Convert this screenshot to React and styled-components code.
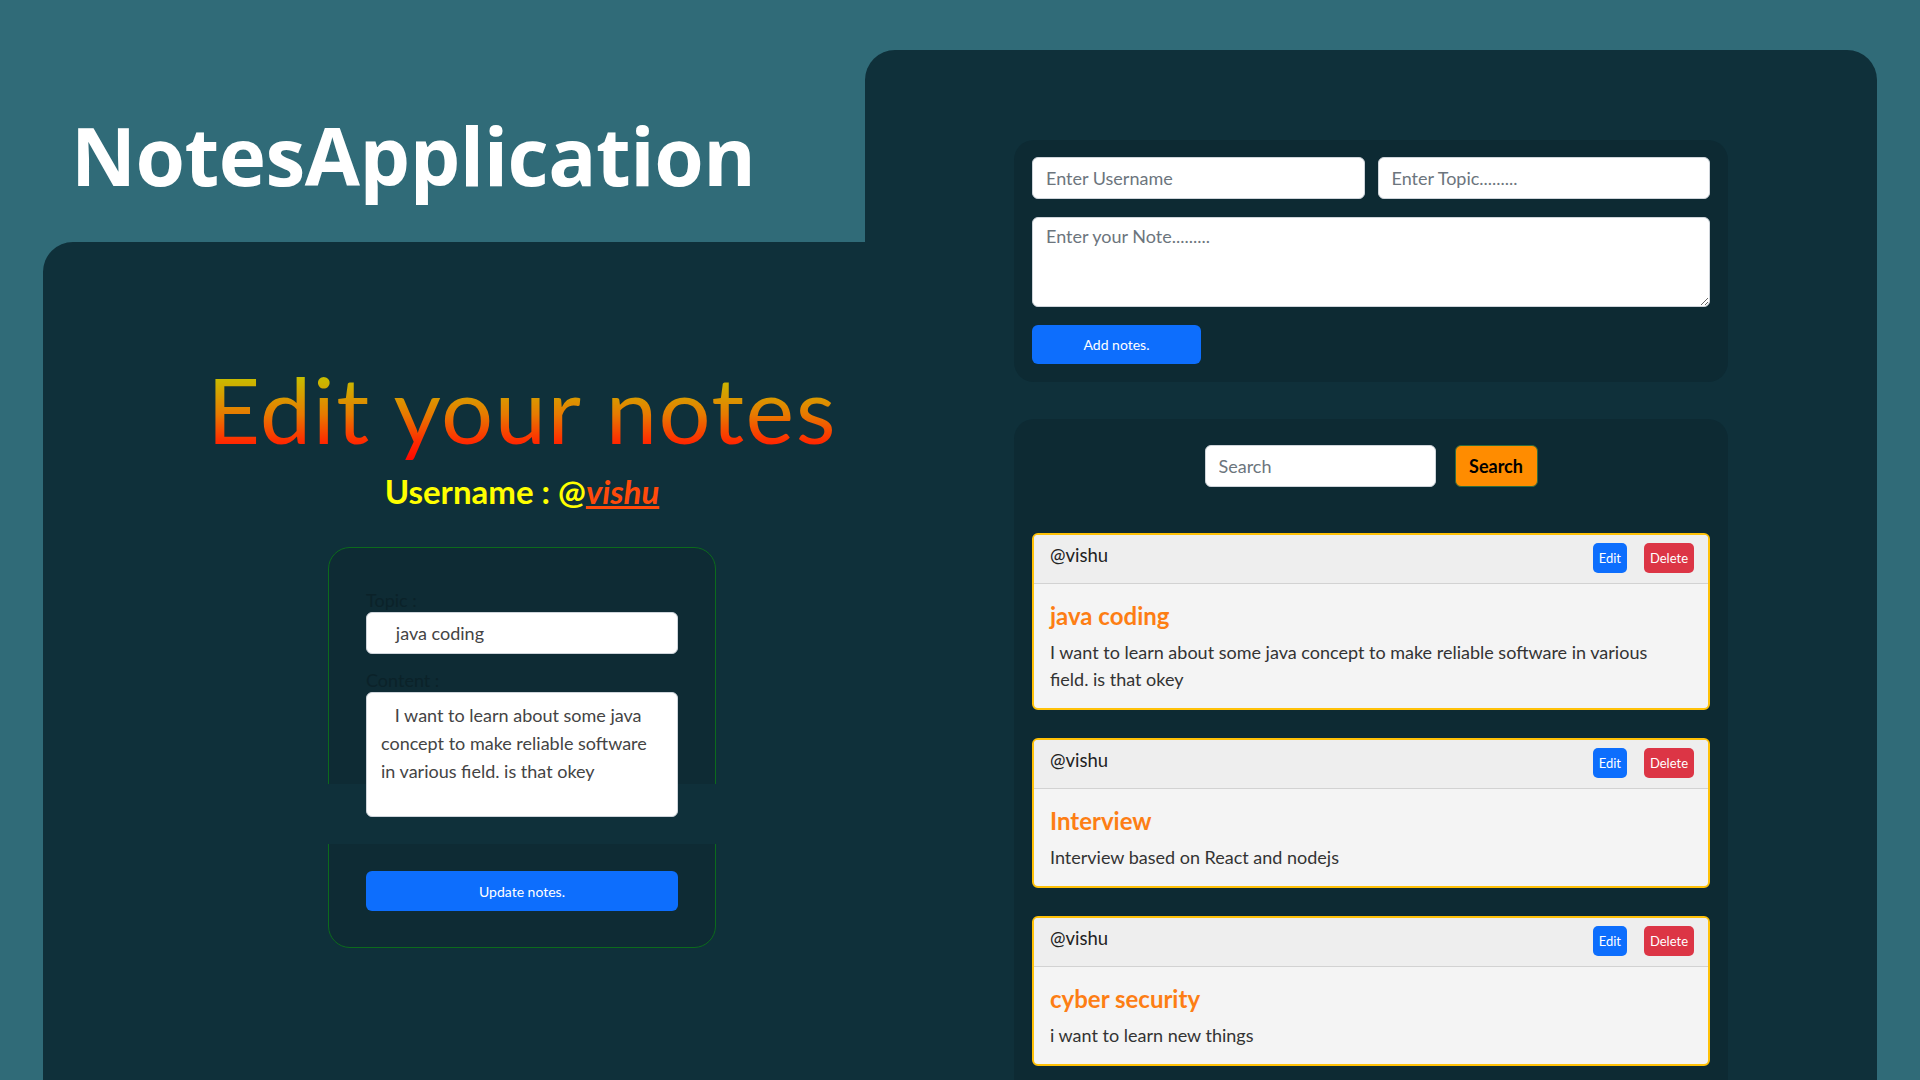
import React from 'react';
import styled, { createGlobalStyle } from 'styled-components';

const GlobalStyle = createGlobalStyle`
  html, body { margin: 0; padding: 0; height: 100%; overflow: hidden; background: #306b78; }
  body { font-family: Lato, "Open Sans", sans-serif; }
  * { box-sizing: border-box; }
`;

const Page = styled.div`
  display: grid;
  grid-template-columns: 822px 1012px;
  padding: 50px 43px 0;
  height: 1080px;
  overflow: hidden;
`;

const LeftCol = styled.div`
  display: flex;
  flex-direction: column;
  min-height: 0;
`;

const Header = styled.header`
  flex: none;
  height: 192px;
  padding: 65px 0 0 28px;
`;

const AppTitle = styled.h1`
  margin: 0;
  font-family: "Open Sans", sans-serif;
  font-weight: 700;
  font-size: 80px;
  line-height: 80px;
  color: #ffffff;
  letter-spacing: -0.5px;
`;

const LeftPanel = styled.section`
  flex: 1;
  background: #0f303a;
  border-top-left-radius: 30px;
  display: flex;
  flex-direction: column;
  align-items: center;
  padding: 112px 0 0 136px;
`;

const EditTitle = styled.h2`
  margin: 0;
  font-family: Lato, sans-serif;
  font-weight: 400;
  font-size: 92px;
  line-height: 110px;
  letter-spacing: 1.5px;
  background: linear-gradient(to bottom, #c4c400 18%, #e77a00 55%, #ff2a00 80%, #ff0000 100%);
  -webkit-background-clip: text;
  background-clip: text;
  color: transparent;
`;

const UserLine = styled.div`
  margin-top: 7px;
  font-family: Lato, sans-serif;
  font-weight: 700;
  font-size: 33px;
  line-height: 40px;
  color: #ffff00;
`;

const UserLink = styled.span`
  color: #ff4a0a;
  font-style: italic;
  text-decoration: underline;
`;

const EditCard = styled.div`
  position: relative;
  margin-top: 36px;
  width: 388px;
  border: 1px solid #0c6a1c;
  border-radius: 22px;
  background: #0e2b34;
  padding: 40px 37px 36px;
  display: flex;
  flex-direction: column;
`;

const Band = styled.div`
  position: absolute;
  top: 236px;
  left: -1px;
  right: -1px;
  height: 60px;
  background: #0f303a;
  z-index: 0;
`;

const HiddenLabel = styled.label`
  position: relative;
  z-index: 1;
  font-size: 18px;
  line-height: 24px;
  color: #0b2229;
  margin-top: ${p => p.$mt || 0}px;
`;

const EditInput = styled.input`
  position: relative;
  z-index: 1;
  height: 42px;
  width: 100%;
  border: 1px solid #ced4da;
  border-radius: 6px;
  background: #fff;
  font-family: Lato, sans-serif;
  font-size: 18px;
  color: #444;
  padding: 0 15px;
  white-space: pre;
  outline: none;
`;

const EditArea = styled.textarea`
  position: relative;
  z-index: 1;
  height: 125px;
  width: 100%;
  border: 1px solid #ced4da;
  border-radius: 6px;
  background: #fff;
  font-family: Lato, sans-serif;
  font-size: 18px;
  line-height: 28px;
  color: #444;
  padding: 8px 12px 8px 14px;
  resize: none;
  outline: none;
`;

const PrimaryButton = styled.button`
  position: relative;
  z-index: 1;
  height: ${p => p.$h || 40}px;
  width: ${p => p.$w || '100%'};
  margin-top: ${p => p.$mt || 0}px;
  background: #0d6efd;
  color: #fff;
  border: none;
  border-radius: 6px;
  font-family: Lato, sans-serif;
  font-size: 14px;
  cursor: pointer;
`;

const RightPanel = styled.section`
  background: #0f303a;
  border-radius: 30px 30px 0 0;
  display: flex;
  flex-direction: column;
  align-items: center;
  padding-top: 90px;
`;

const FormCard = styled.div`
  width: 714px;
  background: #0d2a33;
  border-radius: 20px;
  padding: 17px 18px 18px;
  display: grid;
  grid-template-columns: 1fr 1fr;
  gap: 18px 13px;
`;

const FieldInput = styled.input`
  height: ${p => p.$h || 42}px;
  width: ${p => p.$w || '100%'};
  border: 1px solid #ced4da;
  border-radius: 6px;
  background: #fff;
  font-family: Lato, sans-serif;
  font-size: 18px;
  padding: 0 13px;
  outline: none;
  &::placeholder { color: #6c757d; }
`;

const FieldArea = styled.textarea`
  grid-column: span 2;
  height: 90px;
  border: 1px solid #ced4da;
  border-radius: 6px;
  background: #fff;
  font-family: Lato, sans-serif;
  font-size: 18px;
  padding: 7px 13px;
  outline: none;
  &::placeholder { color: #6c757d; }
`;

const AddButtonWrap = styled.div`
  grid-column: span 2;
`;

const SearchCard = styled.div`
  margin-top: 37px;
  width: 714px;
  flex: 1;
  background: #0d2a33;
  border-radius: 20px 20px 0 0;
  padding: 26px 18px 0;
`;

const SearchRow = styled.div`
  display: flex;
  justify-content: center;
  gap: 19px;
`;

const SearchButton = styled.button`
  width: 83px;
  height: 42px;
  background: #ff8c00;
  border: 1px solid #2f6b3c;
  border-radius: 6px;
  font-family: Lato, sans-serif;
  font-weight: 700;
  font-size: 18px;
  color: #000;
`;

const NoteList = styled.div`
  margin-top: 46px;
  display: flex;
  flex-direction: column;
  gap: 28px;
`;

const NoteCard = styled.article`
  border: 2px solid #ffc107;
  border-radius: 6px;
  overflow: hidden;
  background: #f4f4f4;
`;

const NoteHeader = styled.div`
  height: 49px;
  background: #eeeeee;
  border-bottom: 1px solid #d2d2d2;
  display: flex;
  justify-content: space-between;
  align-items: flex-start;
  padding: 7px 14px 0 16px;
`;

const NoteUser = styled.span`
  font-size: 18.5px;
  line-height: 26px;
  color: #222;
`;

const ActionGroup = styled.div`
  display: flex;
  gap: 17px;
  padding-top: 1px;
`;

const SmallButton = styled.button`
  height: 30px;
  padding: 0 ${p => p.$px || 6}px;
  background: ${p => (p.$danger ? '#dc3545' : '#0d6efd')};
  color: #fff;
  border: none;
  border-radius: 5px;
  font-family: Lato, sans-serif;
  font-size: 13px;
`;

const NoteBody = styled.div`
  padding: 17px 40px 15px 16px;
`;

const NoteTitle = styled.h5`
  margin: 0 0 8px;
  font-size: 24px;
  line-height: 30px;
  font-weight: 700;
  color: #fd7e14;
`;

const NoteText = styled.p`
  margin: 0;
  font-size: 18px;
  line-height: 27px;
  color: #333;
`;

const notes = [
  { title: 'java coding', text: 'I want to learn about some java concept to make reliable software in various field. is that okey' },
  { title: 'Interview', text: 'Interview based on React and nodejs' },
  { title: 'cyber security', text: 'i want to learn new things' },
];

export default function App() {
  return (
    <>
      <GlobalStyle />
      <Page>
        <LeftCol>
          <Header>
            <AppTitle>NotesApplication</AppTitle>
          </Header>
          <LeftPanel>
            <EditTitle>Edit your notes</EditTitle>
            <UserLine>
              Username : @<UserLink>vishu</UserLink>
            </UserLine>
            <EditCard>
              <Band />
              <HiddenLabel>Topic :</HiddenLabel>
              <EditInput defaultValue="   java coding" />
              <HiddenLabel $mt={14}>Content :</HiddenLabel>
              <EditArea defaultValue="   I want to learn about some java concept to make reliable software in various field. is that okey" />
              <PrimaryButton $mt={54}>Update notes.</PrimaryButton>
            </EditCard>
          </LeftPanel>
        </LeftCol>
        <RightPanel>
          <FormCard>
            <FieldInput placeholder="Enter Username" />
            <FieldInput placeholder="Enter Topic........." />
            <FieldArea placeholder="Enter your Note........." />
            <AddButtonWrap>
              <PrimaryButton $w="169px" $h={39}>Add notes.</PrimaryButton>
            </AddButtonWrap>
          </FormCard>
          <SearchCard>
            <SearchRow>
              <FieldInput $w="231px" placeholder="Search" />
              <SearchButton>Search</SearchButton>
            </SearchRow>
            <NoteList>
              {notes.map((n, i) => (
                <NoteCard key={i}>
                  <NoteHeader>
                    <NoteUser>@vishu</NoteUser>
                    <ActionGroup>
                      <SmallButton>Edit</SmallButton>
                      <SmallButton $danger>Delete</SmallButton>
                    </ActionGroup>
                  </NoteHeader>
                  <NoteBody>
                    <NoteTitle>{n.title}</NoteTitle>
                    <NoteText>{n.text}</NoteText>
                  </NoteBody>
                </NoteCard>
              ))}
            </NoteList>
          </SearchCard>
        </RightPanel>
      </Page>
    </>
  );
}
